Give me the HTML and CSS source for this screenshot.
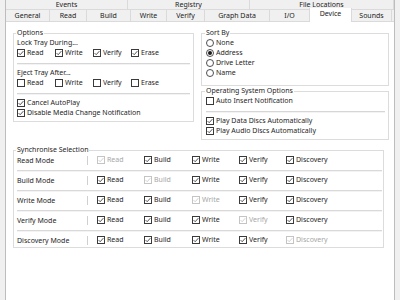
FILE: index.html
```html
<!DOCTYPE html>
<html>
<head>
<meta charset="utf-8">
<link rel="stylesheet" href="styles.css">
</head>
<body>
<div class="frame">
  <div class="tabs r1">
    <div class="tab">Events</div>
    <div class="tab">Registry</div>
    <div class="tab">File Locations</div>
  </div>
  <div class="tabs r2">
    <div class="tab">General</div>
    <div class="tab">Read</div>
    <div class="tab">Build</div>
    <div class="tab">Write</div>
    <div class="tab">Verify</div>
    <div class="tab">Graph Data</div>
    <div class="tab">I/O</div>
    <div class="tab sel">Device</div>
    <div class="tab">Sounds</div>
  </div>
  <div class="panel">
    <div class="top">
      <fieldset class="box opts">
        <legend>Options</legend>
        <div class="line">Lock Tray During...</div>
        <div class="cbrow">
          <div class="item"><svg class="cb" viewBox="0 0 8 8" width="8" height="8"><rect x="0.5" y="0.5" width="7" height="7"/><path d="M1.6 4.1 L3.2 5.7 L6.4 2.1"/></svg>Read</div>
          <div class="item"><svg class="cb" viewBox="0 0 8 8" width="8" height="8"><rect x="0.5" y="0.5" width="7" height="7"/><path d="M1.6 4.1 L3.2 5.7 L6.4 2.1"/></svg>Write</div>
          <div class="item"><svg class="cb" viewBox="0 0 8 8" width="8" height="8"><rect x="0.5" y="0.5" width="7" height="7"/><path d="M1.6 4.1 L3.2 5.7 L6.4 2.1"/></svg>Verify</div>
          <div class="item"><svg class="cb" viewBox="0 0 8 8" width="8" height="8"><rect x="0.5" y="0.5" width="7" height="7"/><path d="M1.6 4.1 L3.2 5.7 L6.4 2.1"/></svg>Erase</div>
        </div>
        <div class="sep"></div>
        <div class="line">Eject Tray After...</div>
        <div class="cbrow">
          <div class="item"><svg class="cb" viewBox="0 0 8 8" width="8" height="8"><rect x="0.5" y="0.5" width="7" height="7"/></svg>Read</div>
          <div class="item"><svg class="cb" viewBox="0 0 8 8" width="8" height="8"><rect x="0.5" y="0.5" width="7" height="7"/></svg>Write</div>
          <div class="item"><svg class="cb" viewBox="0 0 8 8" width="8" height="8"><rect x="0.5" y="0.5" width="7" height="7"/></svg>Verify</div>
          <div class="item"><svg class="cb" viewBox="0 0 8 8" width="8" height="8"><rect x="0.5" y="0.5" width="7" height="7"/></svg>Erase</div>
        </div>
        <div class="sep"></div>
        <div class="item"><svg class="cb" viewBox="0 0 8 8" width="8" height="8"><rect x="0.5" y="0.5" width="7" height="7"/><path d="M1.6 4.1 L3.2 5.7 L6.4 2.1"/></svg>Cancel AutoPlay</div>
        <div class="item"><svg class="cb" viewBox="0 0 8 8" width="8" height="8"><rect x="0.5" y="0.5" width="7" height="7"/><path d="M1.6 4.1 L3.2 5.7 L6.4 2.1"/></svg>Disable Media Change Notification</div>
      </fieldset>
      <div class="rightcol">
        <fieldset class="box sort">
          <legend>Sort By</legend>
          <div class="item"><svg class="rb" viewBox="0 0 8 8" width="8" height="8"><circle cx="4" cy="4" r="3.5"/></svg>None</div>
          <div class="item"><svg class="rb on" viewBox="0 0 8 8" width="8" height="8"><circle cx="4" cy="4" r="3.5"/><circle class="dot" cx="4" cy="4" r="2"/></svg>Address</div>
          <div class="item"><svg class="rb" viewBox="0 0 8 8" width="8" height="8"><circle cx="4" cy="4" r="3.5"/></svg>Drive Letter</div>
          <div class="item"><svg class="rb" viewBox="0 0 8 8" width="8" height="8"><circle cx="4" cy="4" r="3.5"/></svg>Name</div>
        </fieldset>
        <fieldset class="box os">
          <legend>Operating System Options</legend>
          <div class="item"><svg class="cb" viewBox="0 0 8 8" width="8" height="8"><rect x="0.5" y="0.5" width="7" height="7"/></svg>Auto Insert Notification</div>
          <div class="sep"></div>
          <div class="item"><svg class="cb" viewBox="0 0 8 8" width="8" height="8"><rect x="0.5" y="0.5" width="7" height="7"/><path d="M1.6 4.1 L3.2 5.7 L6.4 2.1"/></svg>Play Data Discs Automatically</div>
          <div class="item"><svg class="cb" viewBox="0 0 8 8" width="8" height="8"><rect x="0.5" y="0.5" width="7" height="7"/><path d="M1.6 4.1 L3.2 5.7 L6.4 2.1"/></svg>Play Audio Discs Automatically</div>
        </fieldset>
      </div>
    </div>
    <fieldset class="box sync">
      <legend>Synchronise Selection</legend>
      <div class="srow">
        <div class="slabel">Read Mode</div><div class="vdiv"></div>
        <div class="cells">
          <div class="item dis"><svg class="cb" viewBox="0 0 8 8" width="8" height="8"><rect x="0.5" y="0.5" width="7" height="7"/><path d="M1.6 4.1 L3.2 5.7 L6.4 2.1"/></svg>Read</div>
          <div class="item"><svg class="cb" viewBox="0 0 8 8" width="8" height="8"><rect x="0.5" y="0.5" width="7" height="7"/><path d="M1.6 4.1 L3.2 5.7 L6.4 2.1"/></svg>Build</div>
          <div class="item"><svg class="cb" viewBox="0 0 8 8" width="8" height="8"><rect x="0.5" y="0.5" width="7" height="7"/><path d="M1.6 4.1 L3.2 5.7 L6.4 2.1"/></svg>Write</div>
          <div class="item"><svg class="cb" viewBox="0 0 8 8" width="8" height="8"><rect x="0.5" y="0.5" width="7" height="7"/><path d="M1.6 4.1 L3.2 5.7 L6.4 2.1"/></svg>Verify</div>
          <div class="item"><svg class="cb" viewBox="0 0 8 8" width="8" height="8"><rect x="0.5" y="0.5" width="7" height="7"/><path d="M1.6 4.1 L3.2 5.7 L6.4 2.1"/></svg>Discovery</div>
        </div>
      </div>
      <div class="ssep"></div>
      <div class="srow">
        <div class="slabel">Build Mode</div><div class="vdiv"></div>
        <div class="cells">
          <div class="item"><svg class="cb" viewBox="0 0 8 8" width="8" height="8"><rect x="0.5" y="0.5" width="7" height="7"/><path d="M1.6 4.1 L3.2 5.7 L6.4 2.1"/></svg>Read</div>
          <div class="item dis"><svg class="cb" viewBox="0 0 8 8" width="8" height="8"><rect x="0.5" y="0.5" width="7" height="7"/><path d="M1.6 4.1 L3.2 5.7 L6.4 2.1"/></svg>Build</div>
          <div class="item"><svg class="cb" viewBox="0 0 8 8" width="8" height="8"><rect x="0.5" y="0.5" width="7" height="7"/><path d="M1.6 4.1 L3.2 5.7 L6.4 2.1"/></svg>Write</div>
          <div class="item"><svg class="cb" viewBox="0 0 8 8" width="8" height="8"><rect x="0.5" y="0.5" width="7" height="7"/><path d="M1.6 4.1 L3.2 5.7 L6.4 2.1"/></svg>Verify</div>
          <div class="item"><svg class="cb" viewBox="0 0 8 8" width="8" height="8"><rect x="0.5" y="0.5" width="7" height="7"/><path d="M1.6 4.1 L3.2 5.7 L6.4 2.1"/></svg>Discovery</div>
        </div>
      </div>
      <div class="ssep"></div>
      <div class="srow">
        <div class="slabel">Write Mode</div><div class="vdiv"></div>
        <div class="cells">
          <div class="item"><svg class="cb" viewBox="0 0 8 8" width="8" height="8"><rect x="0.5" y="0.5" width="7" height="7"/><path d="M1.6 4.1 L3.2 5.7 L6.4 2.1"/></svg>Read</div>
          <div class="item"><svg class="cb" viewBox="0 0 8 8" width="8" height="8"><rect x="0.5" y="0.5" width="7" height="7"/><path d="M1.6 4.1 L3.2 5.7 L6.4 2.1"/></svg>Build</div>
          <div class="item dis"><svg class="cb" viewBox="0 0 8 8" width="8" height="8"><rect x="0.5" y="0.5" width="7" height="7"/><path d="M1.6 4.1 L3.2 5.7 L6.4 2.1"/></svg>Write</div>
          <div class="item"><svg class="cb" viewBox="0 0 8 8" width="8" height="8"><rect x="0.5" y="0.5" width="7" height="7"/><path d="M1.6 4.1 L3.2 5.7 L6.4 2.1"/></svg>Verify</div>
          <div class="item"><svg class="cb" viewBox="0 0 8 8" width="8" height="8"><rect x="0.5" y="0.5" width="7" height="7"/><path d="M1.6 4.1 L3.2 5.7 L6.4 2.1"/></svg>Discovery</div>
        </div>
      </div>
      <div class="ssep"></div>
      <div class="srow">
        <div class="slabel">Verify Mode</div><div class="vdiv"></div>
        <div class="cells">
          <div class="item"><svg class="cb" viewBox="0 0 8 8" width="8" height="8"><rect x="0.5" y="0.5" width="7" height="7"/><path d="M1.6 4.1 L3.2 5.7 L6.4 2.1"/></svg>Read</div>
          <div class="item"><svg class="cb" viewBox="0 0 8 8" width="8" height="8"><rect x="0.5" y="0.5" width="7" height="7"/><path d="M1.6 4.1 L3.2 5.7 L6.4 2.1"/></svg>Build</div>
          <div class="item"><svg class="cb" viewBox="0 0 8 8" width="8" height="8"><rect x="0.5" y="0.5" width="7" height="7"/><path d="M1.6 4.1 L3.2 5.7 L6.4 2.1"/></svg>Write</div>
          <div class="item dis"><svg class="cb" viewBox="0 0 8 8" width="8" height="8"><rect x="0.5" y="0.5" width="7" height="7"/><path d="M1.6 4.1 L3.2 5.7 L6.4 2.1"/></svg>Verify</div>
          <div class="item"><svg class="cb" viewBox="0 0 8 8" width="8" height="8"><rect x="0.5" y="0.5" width="7" height="7"/><path d="M1.6 4.1 L3.2 5.7 L6.4 2.1"/></svg>Discovery</div>
        </div>
      </div>
      <div class="ssep"></div>
      <div class="srow">
        <div class="slabel">Discovery Mode</div><div class="vdiv"></div>
        <div class="cells">
          <div class="item"><svg class="cb" viewBox="0 0 8 8" width="8" height="8"><rect x="0.5" y="0.5" width="7" height="7"/><path d="M1.6 4.1 L3.2 5.7 L6.4 2.1"/></svg>Read</div>
          <div class="item"><svg class="cb" viewBox="0 0 8 8" width="8" height="8"><rect x="0.5" y="0.5" width="7" height="7"/><path d="M1.6 4.1 L3.2 5.7 L6.4 2.1"/></svg>Build</div>
          <div class="item"><svg class="cb" viewBox="0 0 8 8" width="8" height="8"><rect x="0.5" y="0.5" width="7" height="7"/><path d="M1.6 4.1 L3.2 5.7 L6.4 2.1"/></svg>Write</div>
          <div class="item"><svg class="cb" viewBox="0 0 8 8" width="8" height="8"><rect x="0.5" y="0.5" width="7" height="7"/><path d="M1.6 4.1 L3.2 5.7 L6.4 2.1"/></svg>Verify</div>
          <div class="item dis"><svg class="cb" viewBox="0 0 8 8" width="8" height="8"><rect x="0.5" y="0.5" width="7" height="7"/><path d="M1.6 4.1 L3.2 5.7 L6.4 2.1"/></svg>Discovery</div>
        </div>
      </div>
    </fieldset>
  </div>
</div>
</body>
</html>
```
FILE: styles.css
```css
html, body {
  margin: 0;
  padding: 0;
}
body {
  width: 400px;
  height: 300px;
  overflow: hidden;
  background: #f0f0f0;
  font-family: "Noto Sans", "DejaVu Sans", sans-serif;
  font-size: 7px;
  color: #1e1e1e;
}
.frame {
  height: 300px;
  margin: 0 5px;
  border-left: 1px solid #bdbdbd;
  border-right: 1px solid #bdbdbd;
  display: flex;
  flex-direction: column;
  background: #f0f0f0;
}
.tabs {
  display: grid;
  box-sizing: border-box;
}
.r1 {
  grid-template-columns: 122px 122px 1fr;
  height: 10px;
  border-bottom: 1px solid #dadada;
}
.r2 {
  grid-template-columns: 44px 37px 44px 36px 38px 65px 40px 42px 40px;
  height: 11px;
}
.tab {
  border-right: 1px solid #dadada;
  text-align: center;
  line-height: 9px;
  white-space: nowrap;
  overflow: hidden;
  color: #222;
}
.r2 .tab {
  line-height: 11px;
}
.tab.sel {
  position: relative;
  background: #fff;
  margin-top: -2px;
  margin-bottom: -1px;
  line-height: 12px;
  border-left: 1px solid #dadada;
  margin-left: -1px;
}
.panel {
  flex: 1;
  background: #fff;
  border-top: 1px solid #dadada;
  padding: 6px 5px 0 7px;
}
.top {
  display: grid;
  grid-template-columns: 181px 188px;
  column-gap: 7px;
  align-items: start;
}
fieldset.box {
  margin: 0;
  min-width: 0;
  border: 1px solid #dcdcdc;
  padding: 0 3px 3px 3px;
}
legend {
  padding: 0 1px;
  margin-left: -1px;
  line-height: 10px;
  height: 10px;
}
.line {
  line-height: 10px;
  height: 10px;
  white-space: nowrap;
}
.item {
  display: flex;
  align-items: center;
  gap: 2px;
  height: 10px;
  line-height: 10px;
  white-space: nowrap;
}
.cbrow {
  display: grid;
  grid-template-columns: 38px 38px 38px 38px;
}
.sep {
  height: 1px;
  background: #d6d6d6;
  box-shadow: 0 1px 0 #f3f3f3;
  margin: 5px 0 4px;
}
.cb rect {
  fill: #fff;
  stroke: #3a3a3a;
  stroke-width: 1;
}
.cb path {
  fill: none;
  stroke: #2a2a2a;
  stroke-width: 0.8;
}
.dis {
  color: #a6a6a6;
}
.dis .cb rect {
  stroke: #c4c4c4;
}
.dis .cb path {
  stroke: #c4c4c4;
}
.rb circle {
  fill: #fff;
  stroke: #3a3a3a;
  stroke-width: 0.9;
}
.rb .dot {
  fill: #1a1a1a;
  stroke: none;
}
.rightcol {
  display: flex;
  flex-direction: column;
}
fieldset.sort, fieldset.os {
  padding-left: 4px;
}
fieldset.sort {
  padding-bottom: 7px;
}
fieldset.sync {
  margin: 5px 5px 0 0;
  padding: 0 1px 2px 3px;
}
.srow {
  display: flex;
  align-items: center;
  height: 10px;
}
.slabel {
  width: 70px;
  white-space: nowrap;
}
.vdiv {
  width: 1px;
  height: 9px;
  background: #cfcfcf;
}
.cells {
  display: grid;
  grid-template-columns: 47px 48px 47px 47px 60px;
  padding-left: 9px;
}
.ssep {
  height: 1px;
  background: #d9d9d9;
  box-shadow: 0 1px 0 #f3f3f3;
  margin: 5px 0 4px;
}
```
